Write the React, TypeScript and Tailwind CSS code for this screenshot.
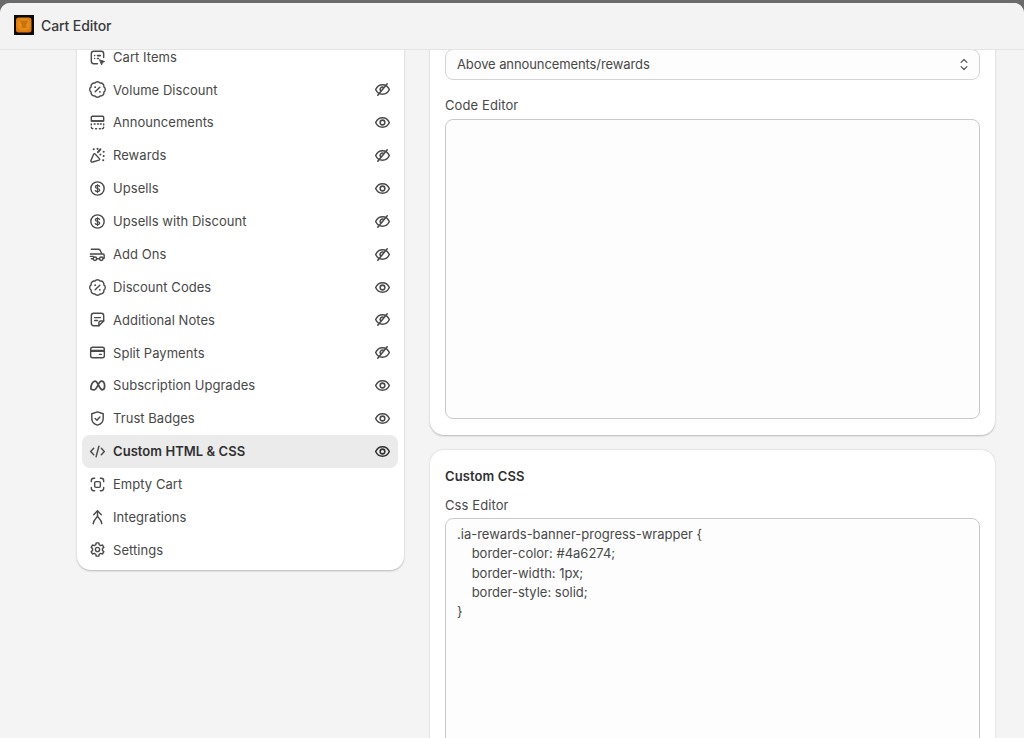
import React from "react";

const S = ({ children }: { children: React.ReactNode }) => (
  <svg viewBox="0 0 20 20" fill="none" stroke="currentColor" strokeWidth="1.500" strokeLinecap="round" strokeLinejoin="round" className="h-[19px] w-[19px] shrink-0">
    {children}
  </svg>
);

const Badge = () => (
  <g transform="translate(0.160 0.160) scale(0.820)" strokeWidth="1.800">
    <path d="M3.850 8.620a4 4 0 0 1 4.780-4.770 4 4 0 0 1 6.740 0 4 4 0 0 1 4.780 4.780 4 4 0 0 1 0 6.740 4 4 0 0 1-4.770 4.780 4 4 0 0 1-6.750 0 4 4 0 0 1-4.780-4.770 4 4 0 0 1 0-6.760Z" />
    <path d="M15 9l-6 6" />
    <path d="M9 9h.01M15 15h.01" strokeWidth="2.400" />
  </g>
);
const Dollar = () => (
  <>
    <circle cx="10" cy="10" r="7" />
    <path d="M12.200 7.800c-.4-.6-1.200-1-2.200-1-1.300 0-2.200.6-2.200 1.600 0 2.200 4.500 1 4.500 3.200 0 1-1 1.600-2.300 1.600-1 0-1.900-.4-2.300-1M10 5.800v8.400" strokeWidth="1.300" />
  </>
);
const icons: Record<string, React.ReactNode> = {
  cart: (
    <>
      <path d="M10 16.500H6a2.500 2.500 0 0 1-2.500-2.500V6A2.500 2.500 0 0 1 6 3.500h8A2.500 2.500 0 0 1 16.500 6v4" />
      <path d="M7 8h.01M7 11h.01M10 8h3M10 11h1" strokeWidth="1.700" />
      <path d="M12.500 12.500l5 1.800-2.200.9-.9 2.200z" fill="currentColor" strokeWidth="1" />
    </>
  ),
  badge: <Badge />,
  announce: (
    <>
      <rect x="3.500" y="3.500" width="13" height="5" rx="1" />
      <path d="M3.500 8.500h13" />
      <path d="M3.500 12.500v-1M3.500 15c0 1 .6 1.500 1.500 1.500M8 16.500h1M12 16.500h1M15 16.500c1 0 1.500-.5 1.500-1.500M16.500 12.500v-1M6.500 11.500h1M10 11.500h1M13 11.500h1" />
    </>
  ),
  rewards: (
    <>
      <path d="M3 15.500c0 1 .8 1.700 2 1.400l6.500-2c.8-.3 1-1 .5-1.600L7.500 8.500c-.6-.6-1.400-.4-1.700.4z" />
      <path d="M6 3.500h.01M10 3h.01M10.500 6.500l2.500-3M16.500 6h.01M13 9h.01M16.500 10.500h.01M16 15h.01" strokeWidth="2.200" />
    </>
  ),
  dollar: <Dollar />,
  truck: (
    <>
      <path d="M3.500 4.500h7.500c.8 0 1.300.3 1.700 1l2 4h1.300c.6 0 1 .4 1 1V14h-1M2.500 9.500h12M2.500 12h3M3.500 14.500H5M9.500 14.500h2.500" />
      <circle cx="7.300" cy="14.500" r="1.800" />
      <circle cx="14" cy="14.500" r="1.800" />
    </>
  ),
  note: (
    <>
      <path d="M16.500 11.500V6A2.500 2.500 0 0 0 14 3.500H6A2.500 2.500 0 0 0 3.500 6v8A2.500 2.500 0 0 0 6 16.500h5.500z" />
      <path d="M7 8h6M7 11h3M11.500 16.500v-3a2 2 0 0 1 2-2h3" />
    </>
  ),
  card: (
    <>
      <rect x="2.800" y="4.500" width="14.400" height="11" rx="2" />
      <path d="M3.500 8.300h13" strokeWidth="2.200" />
      <path d="M12 12h2" />
    </>
  ),
  meta: (
    <path d="M3 13.500c0-4.500 2-8 4.500-8 3 0 4.500 9 7.500 9 1.500 0 2.500-1.500 2.500-4 0-3-1.500-5-3.500-5-2.800 0-4.500 9-7.500 9-1.500 0-3.500-.5-3.500-1z" strokeWidth="1.800" />
  ),
  shield: (
    <>
      <path d="M10 3l6 2v5c0 3.500-2.500 6-6 7-3.500-1-6-3.500-6-7V5z" />
      <path d="M7.500 10l2 1.800 3-3.300" />
    </>
  ),
  code: <path d="M6 6.500L2.800 10 6 13.500M14 6.500l3.200 3.500-3.200 3.500M11.500 4.500l-3 11" />,
  empty: (
    <>
      <path d="M3.500 7V6A2.500 2.500 0 0 1 6 3.500h1M13 3.500h1A2.500 2.500 0 0 1 16.500 6v1M16.500 13v1a2.500 2.500 0 0 1-2.500 2.500h-1M7 16.500H6A2.500 2.500 0 0 1 3.500 14v-1" />
      <rect x="7" y="7" width="6" height="6" rx="1.500" />
    </>
  ),
  integ: (
    <>
      <path d="M6 7l4-4 4 4" />
      <path d="M10 3.500v4.500c0 2.500-4 3.500-4.500 8.500M10 8c0 2.500 4 3.500 4.500 8.500" />
    </>
  ),
  gear: (
    <>
      <path d="M8.600 3h2.800l.4 2 1.500.9 2-.6 1.400 2.400-1.500 1.400v1.800l1.500 1.400-1.400 2.400-2-.6-1.500.9-.4 2H8.600l-.4-2-1.500-.9-2 .6-1.400-2.400 1.500-1.400V9.100L3.300 7.700l1.400-2.400 2 .6 1.500-.9z" />
      <circle cx="10" cy="10" r="2.200" />
    </>
  ),
};

const Eye = ({ off, dark }: { off?: boolean; dark?: boolean }) => (
  <svg viewBox="0 0 20 20" fill="none" stroke="currentColor" strokeWidth="1.600" strokeLinecap="round" strokeLinejoin="round" className={`h-[19px] w-[19px] shrink-0 ${dark ? "text-[#303030]" : "text-[#4a4a4a]"}`}>
    <path d="M2.800 10c1.500-3.200 4-5 7.200-5s5.700 1.800 7.200 5c-1.500 3.200-4 5-7.200 5s-5.700-1.800-7.200-5z" />
    {off ? <path d="M5 16L15 4M8 11.500a2.500 2.500 0 0 1 3.500-3.500" /> : <circle cx="10" cy="10" r="2.500" />}
  </svg>
);

const rows: { label: string; icon: string; eye?: "on" | "off"; active?: boolean }[] = [
  { label: "Cart Items", icon: "cart" },
  { label: "Volume Discount", icon: "badge", eye: "off" },
  { label: "Announcements", icon: "announce", eye: "on" },
  { label: "Rewards", icon: "rewards", eye: "off" },
  { label: "Upsells", icon: "dollar", eye: "on" },
  { label: "Upsells with Discount", icon: "dollar", eye: "off" },
  { label: "Add Ons", icon: "truck", eye: "off" },
  { label: "Discount Codes", icon: "badge", eye: "on" },
  { label: "Additional Notes", icon: "note", eye: "off" },
  { label: "Split Payments", icon: "card", eye: "off" },
  { label: "Subscription Upgrades", icon: "meta", eye: "on" },
  { label: "Trust Badges", icon: "shield", eye: "on" },
  { label: "Custom HTML & CSS", icon: "code", eye: "on", active: true },
  { label: "Empty Cart", icon: "empty" },
  { label: "Integrations", icon: "integ" },
  { label: "Settings", icon: "gear" },
];

const css = `.ia-rewards-banner-progress-wrapper {
    border-color: #4a6274;
    border-width: 1px;
    border-style: solid;
}`;

export default function App() {
  return (
    <div className="h-[738px] w-[1024px] overflow-hidden bg-[#6b6b6b] pt-[3px] font-['Inter',sans-serif] text-[13px] text-[#303030]">
      <div className="h-full overflow-hidden rounded-t-[10px] bg-[#f4f4f4]">
        <header className="relative z-10 flex h-[47px] items-center gap-[7px] border-b border-[#e4e4e4] bg-[#f3f3f3] pl-[14px]">
          <svg viewBox="0 0 20 20" className="h-5 w-5 shrink-0 -translate-y-px">
            <defs>
              <radialGradient id="logo" cx="50%" cy="45%" r="60%">
                <stop offset="0%" stopColor="#f9a826" />
                <stop offset="100%" stopColor="#d9730d" />
              </radialGradient>
            </defs>
            <rect width="20" height="20" fill="#0b0b0b" />
            <rect x="2" y="2.500" width="15.500" height="15" rx="2.500" fill="url(#logo)" />
            <path d="M6.500 5.500h7v2.500l-1 1.200v3.800h-5V9.200l-1-1.200z" fill="#c9730f" />
          </svg>
          <span className="-translate-y-px text-[14px] font-medium tracking-[-0.1px] text-[#3a3a3a]">Cart Editor</span>
        </header>
        <main className="-mt-[30px] flex items-start gap-[26.500px] pl-[77px]">
          <nav className="w-[326.500px] shrink-0 rounded-b-[14px] bg-white pb-[3.400px] pl-[5px] pr-[5.500px] pt-[20.600px] shadow-[0_1px_2px_rgba(0,0,0,0.25)]">
            {rows.map((r) => (
              <div key={r.label} className={`flex h-[32.870px] items-center rounded-lg pl-[6px] pr-[6px] tracking-[0.05px] ${r.active ? "bg-[#ebebeb] font-semibold tracking-[0.1px]" : "text-[#484848]"}`}>
                <span className="flex text-[#4a4a4a]">
                  <S>{icons[r.icon]}</S>
                </span>
                <span className="ml-[6px] flex-1 pt-px">{r.label}</span>
                {r.eye && <Eye off={r.eye === "off"} dark={r.active} />}
              </div>
            ))}
          </nav>
          <section className="flex w-[564.500px] shrink-0 flex-col gap-[15px]">
            <div className="rounded-[14px] bg-white pb-[16px] pl-[15px] pr-[15px] pt-[29px] shadow-[0_1px_2px_rgba(0,0,0,0.25)]">
              <div className="flex h-[31px] items-center justify-between rounded-lg border border-[#d4d4d4] bg-[#fdfdfd] pl-[11px] pr-[10px] tracking-[-0.1px] text-[#484848]">
                <span className="pt-px">Above announcements/rewards</span>
                <svg viewBox="0 0 12 18" fill="none" stroke="#5a5a5a" strokeWidth="1.500" strokeLinecap="round" strokeLinejoin="round" className="h-[15px] w-[10px]">
                  <path d="M2.500 6.500L6 3l3.500 3.500M2.500 11.500L6 15l3.500-3.500" />
                </svg>
              </div>
              <div className="mb-[5px] mt-[16px] h-[18px] leading-[18px] tracking-[0.1px] text-[#484848]">Code Editor</div>
              <div className="h-[300px] rounded-lg border border-[#c9c9c9] bg-[#fdfdfd]" />
            </div>
            <div className="rounded-[14px] bg-white pb-[15px] pl-[15px] pr-[15px] pt-[17px] shadow-[0_0_2px_rgba(0,0,0,0.2)]">
              <h2 className="h-[18px] font-semibold leading-[18px] tracking-[0.1px]">Custom CSS</h2>
              <div className="mb-[4px] mt-[11px] h-[18px] leading-[18px] tracking-[0.1px] text-[#484848]">Css Editor</div>
              <pre className="h-[300px] rounded-lg border border-[#c9c9c9] bg-[#fdfdfd] px-[11px] py-[6px] font-['Inter',sans-serif] leading-[19.300px] text-[#484848]">{css}</pre>
            </div>
          </section>
        </main>
      </div>
    </div>
  );
}
